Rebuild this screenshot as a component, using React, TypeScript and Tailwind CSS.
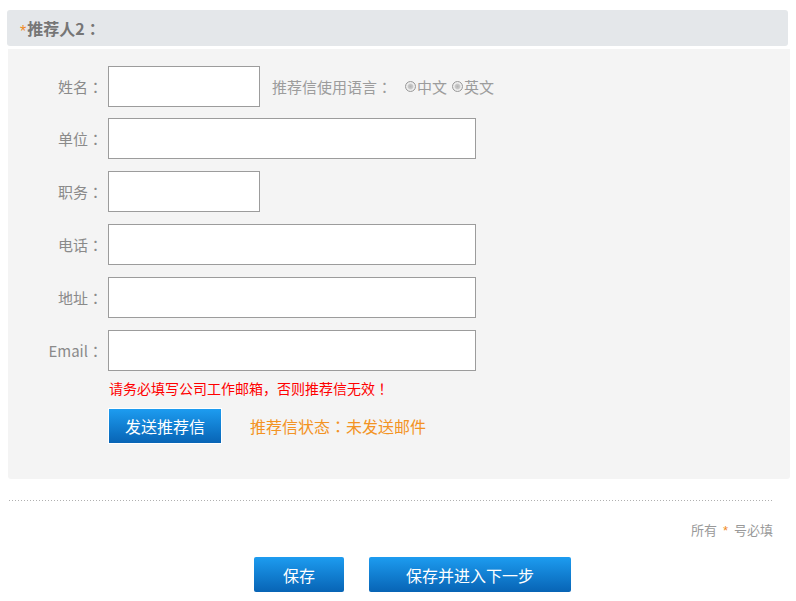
import React from "react";

const font = "font-['Microsoft_YaHei','Noto_Sans_CJK_SC','Noto_Sans',sans-serif]";

const rows = [
  { label: "姓名", width: "w-[152px]", lang: true },
  { label: "单位", width: "w-[368px]" },
  { label: "职务", width: "w-[152px]" },
  { label: "电话", width: "w-[368px]" },
  { label: "地址", width: "w-[368px]" },
  { label: "Email", width: "w-[368px]" },
];

// full-width colon drawn centred in its cell, as the original font does
const Colon = () => <span className="font-['Noto_Sans_CJK_TC',sans-serif]">：</span>;

const Radio = () => (
  <span className="inline-block w-[11px] h-[11px] rounded-full border border-[#9a9a9a] bg-[radial-gradient(circle,#b5b5b5_0%,#c9c9c9_35%,#f0f0f0_55%,#dcdcdc_100%)] mr-px" />
);

const App: React.FC = () => {
  return (
    <div className={`w-[796px] h-[601px] bg-white pt-[10px] ${font}`}>
      {/* header */}
      <div className="ml-[7px] w-[781px] h-[36px] bg-[#e4e7ea] rounded-[3px] flex items-center pl-[13px]">
        <span className="text-[#f08a24] text-[16px] leading-none font-['Liberation_Sans',sans-serif] mt-[7px] mr-px">*</span>
        <span className="text-[#767676] text-[16px] font-bold leading-none">
          推荐人2<Colon />
        </span>
      </div>

      {/* panel */}
      <div className="ml-[8px] mt-[3px] w-[782px] h-[430px] bg-[#f4f4f4] rounded-b-[3px] pt-[17px]">
        <div className="flex flex-col gap-[12px]">
          {rows.map((r, i) => (
            <div key={r.label} className={`flex items-center ${i === 1 ? "-mt-px" : ""}`}>
              <label className="w-[95px] text-right text-[15px] text-[#8a8a8a] leading-none">
                {r.label}
                <Colon />
              </label>
              <input
                type="text"
                className={`ml-[5px] h-[41px] ${r.width} bg-white border border-[#9c9c9c] outline-none`}
              />
              {r.lang && (
                <div className="ml-[12px] flex items-center text-[15px] text-[#9c9c9c] leading-none">
                  <span>
                    推荐信使用语言<Colon />
                  </span>
                  <span className="ml-[13px] flex items-center">
                    <Radio />
                    中文
                  </span>
                  <span className="ml-[5px] flex items-center">
                    <Radio />
                    英文
                  </span>
                </div>
              )}
            </div>
          ))}
        </div>

        <p className="ml-[101px] mt-[7px] text-[14px] leading-[20px] text-[#f00]">
          请务必填写公司工作邮箱，否则推荐信无效<span className="font-['Noto_Sans_CJK_TC',sans-serif]">！</span>
        </p>

        <div className="ml-[100px] mt-[10px] flex items-center">
          <button className="w-[114px] h-[36px] border border-white bg-gradient-to-b from-[#1d9cf0] to-[#0864b5] text-white text-[16px]">
            发送推荐信
          </button>
          <span className="ml-[28px] text-[16px] text-[#f39323]">
            推荐信状态<Colon />未发送邮件
          </span>
        </div>
      </div>

      {/* dotted rule */}
      <div className="ml-[9px] mt-[21px] w-[764px] h-px bg-[linear-gradient(to_right,#b0b0b0_1px,transparent_1px)] bg-[length:3px_1px]" />

      <div className="mt-[20px] w-[773px] text-right text-[13px] text-[#999] leading-[18px]">
        所有<span className="text-[#f08a24] mx-[6px] font-['Liberation_Sans',sans-serif]">*</span>号必填
      </div>

      <div className="mt-[17px] ml-[254px] flex gap-[25px]">
        <button className="w-[90px] h-[35px] rounded-[2px] bg-gradient-to-b from-[#1d9cf0] to-[#0864b5] text-white text-[16px]">
          保存
        </button>
        <button className="w-[202px] h-[35px] rounded-[2px] bg-gradient-to-b from-[#1d9cf0] to-[#0864b5] text-white text-[16px]">
          保存并进入下一步
        </button>
      </div>
    </div>
  );
};

export default App;
